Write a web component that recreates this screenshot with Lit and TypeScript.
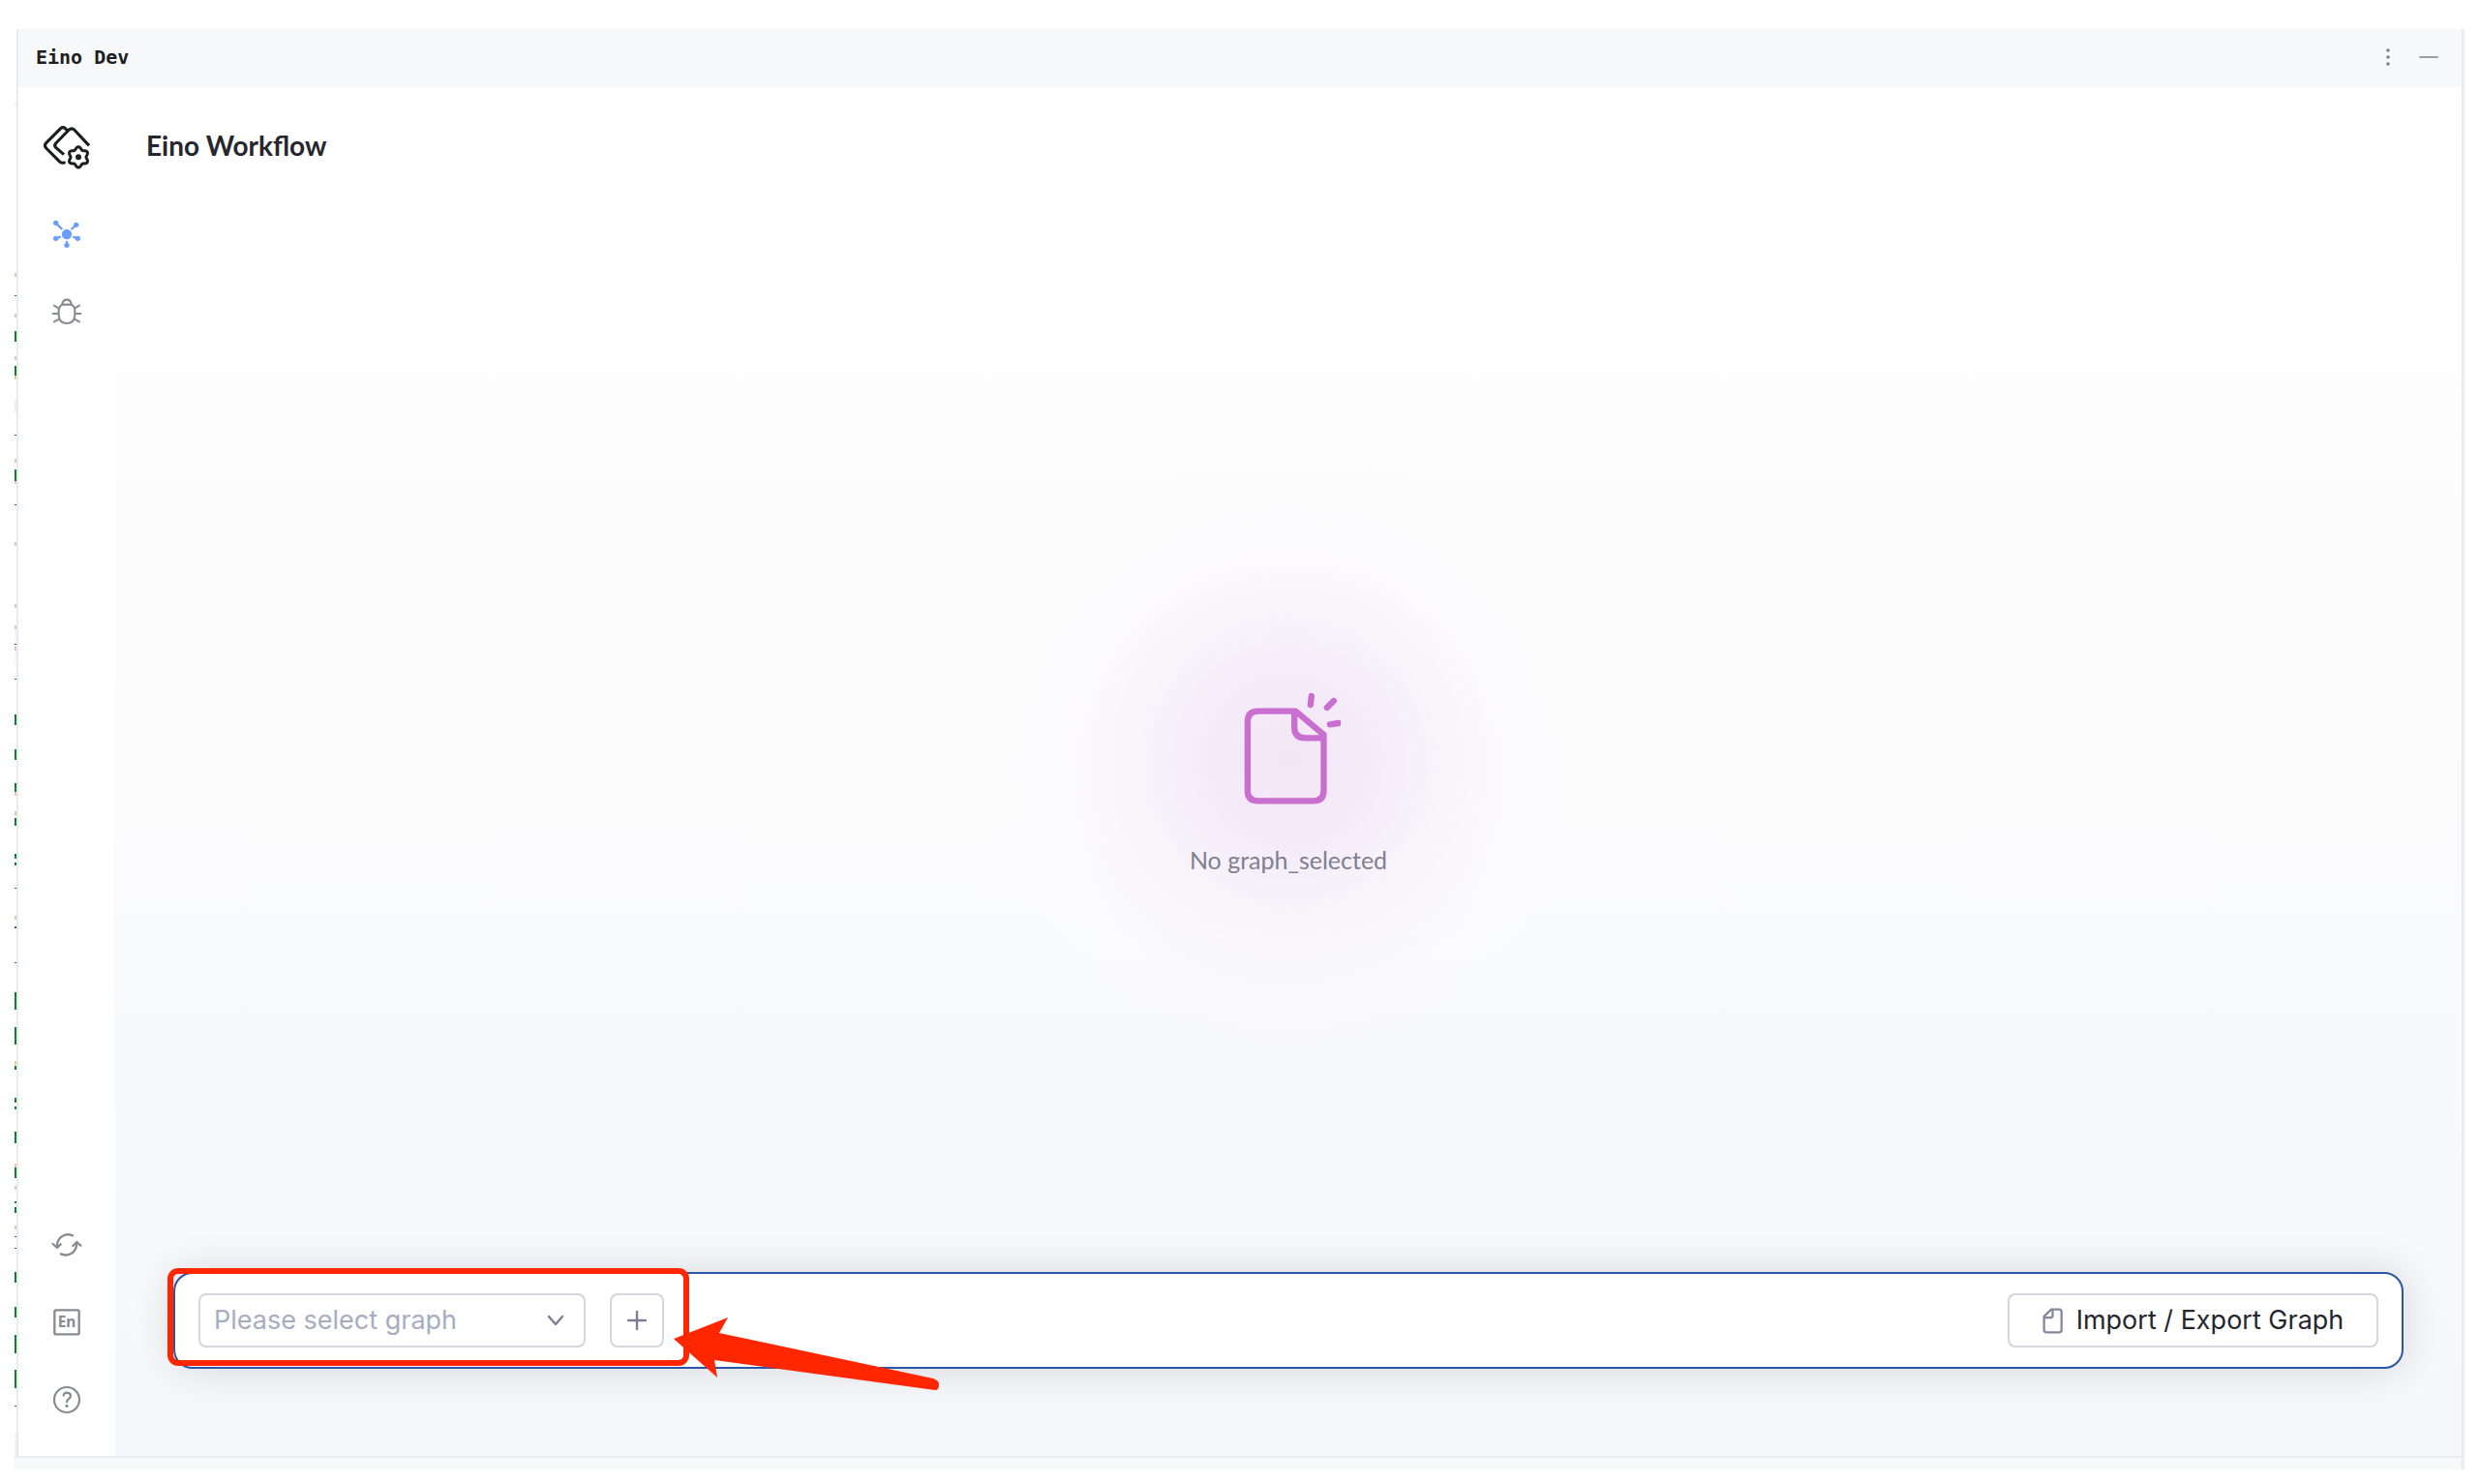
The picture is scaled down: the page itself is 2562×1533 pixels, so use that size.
import { LitElement, html, css, svg } from "lit";
import { customElement, state } from "lit/decorators.js";

/* Wavy closed outline used for the six-lobed cog in the logo. */
function cogPath(cx: number, cy: number, radius: number, depth: number): string {
  const points: string[] = [];
  for (let deg = 0; deg < 360; deg += 6) {
    const a = (deg * Math.PI) / 180;
    const r = radius + depth * Math.cos(6 * (a - Math.PI / 2));
    points.push(`${(cx + r * Math.cos(a)).toFixed(1)} ${(cy + r * Math.sin(a)).toFixed(1)}`);
  }
  return `M${points.join("L")}Z`;
}

const logoIcon = svg`
  <svg class="logo" viewBox="132 383 150 144" fill="none" stroke="#1d1e22" stroke-width="9.5" stroke-linecap="round" stroke-linejoin="round" aria-hidden="true">
    <path d="M207 402L202 397Q195 391 188 397L143 442Q136 450 143 458L186 501Q191 505 199 503"/>
    <path d="M198 478L173 456Q167 450 173 443L214 401Q222 394 230 401L276 450" stroke-linecap="butt"/>
    <path d="${cogPath(243, 486, 28, 4)}" stroke-width="9"/>
    <circle cx="243" cy="486" r="9" fill="#1d1e22" stroke="none"/>
  </svg>`;

const graphIcon = svg`
  <svg class="glyph" viewBox="159 678 96 96" stroke="#6b9dff" stroke-width="7" fill="#6b9dff" aria-hidden="true">
    <path d="M173 691L193 711M236 696L221 711M173 740L188 733M241 740L226 733M207 761V747"/>
    <g stroke="none">
      <circle cx="207" cy="726" r="15.5"/><circle cx="173" cy="691" r="8"/><circle cx="236" cy="697" r="8"/>
      <circle cx="173" cy="739" r="8"/><circle cx="241" cy="739" r="8"/><circle cx="207" cy="760" r="8"/>
    </g>
  </svg>`;

const bugIcon = svg`
  <svg class="glyph" viewBox="159 918 96 96" fill="none" stroke="#878b92" stroke-width="6.5" stroke-linecap="round" stroke-linejoin="round" aria-hidden="true">
    <path d="M193 944H221Q232 950 232 962V978Q230 1002 207 1002Q184 1002 182 978V962Q182 950 193 944Z"/>
    <path d="M193 943Q194 929 207 929Q220 929 221 943"/>
    <path d="M182 955L168 947M180 972H164M183 989L168 997M232 955L246 947M234 972H250M231 989L246 997"/>
  </svg>`;

const refreshIcon = svg`
  <svg class="glyph" viewBox="159 90 96 96" fill="none" stroke="#878b92" stroke-width="7" stroke-linecap="round" stroke-linejoin="round" aria-hidden="true">
    <path d="M225 109Q205 101 190 113Q175 126 177 146"/>
    <path d="M164 135L177 147L188 136"/>
    <path d="M189 166Q208 174 224 163Q239 150 238 130"/>
    <path d="M226 141L238 129L250 140"/>
  </svg>`;

const languageIcon = svg`
  <svg class="glyph" viewBox="159 324 96 96" aria-hidden="true">
    <rect x="169" y="334" width="76" height="75" rx="5" fill="none" stroke="#878b92" stroke-width="7"/>
    <text x="207" y="388" text-anchor="middle" class="lang">En</text>
  </svg>`;

const helpIcon = svg`
  <svg class="glyph" viewBox="159 570 96 96" fill="none" stroke="#878b92" stroke-width="6.5" stroke-linecap="round" aria-hidden="true">
    <circle cx="207" cy="618" r="39"/>
    <path d="M197 605Q198 596 208 596Q219 597 219 606Q219 611 213 615Q207 619 207 625"/>
    <circle cx="207" cy="637" r="5" fill="#878b92" stroke="none"/>
  </svg>`;

const emptyIcon = svg`
  <svg class="empty-icon" viewBox="235 78 320 348" fill="none" stroke="#c86fd0" stroke-width="19" aria-hidden="true">
    <path d="M416 134H300Q267 134 267 167V380Q267 412 300 412H470Q503 412 503 380V207Z" stroke-linejoin="round"/>
    <path d="M412 138V184Q412 217 445 217H503"/>
    <path d="M465 87L462 114M534 102L513 123M549 171L522 175" stroke-linecap="round"/>
  </svg>`;

const chevronIcon = svg`
  <svg class="chevron" viewBox="0 0 18 12" fill="none" stroke="#7c7f92" stroke-width="2.4" stroke-linecap="round" stroke-linejoin="round" aria-hidden="true">
    <path d="M2 2L9 10L16 2"/>
  </svg>`;

const plusIcon = svg`
  <svg class="plus" viewBox="0 0 20 20" stroke="#7c7f92" stroke-width="2.4" stroke-linecap="round" aria-hidden="true">
    <path d="M10 1V19M1 10H19"/>
  </svg>`;

const fileIcon = svg`
  <svg class="file" viewBox="212 178 64 82" fill="none" stroke="#85889a" stroke-width="7" stroke-linejoin="round" aria-hidden="true">
    <path d="M217 205L240 183H264Q272 183 272 191V247Q272 255 264 255H225Q217 255 217 247Z"/>
    <path d="M244 184V202Q244 209 237 209H218"/>
  </svg>`;

type Mark = [top: number, height: number, color: string];
const G = "#0a8420";
const T = "#d9cfa8";

/* Sliver of the code editor that stays visible beside the tool window. */
const editorMarks: Mark[] = [
  [108, 2, "#ebecf0"], [282, 4, T], [305, 1, G], [324, 4, T], [342, 11, G], [368, 4, T], [378, 10, G],
  [388, 4, T], [413, 13, "#e8f1ea"], [449, 1, G], [474, 4, T], [485, 12, G], [497, 3, T], [521, 1, G],
  [560, 4, T], [624, 4, T], [646, 4, T], [650, 35, "#f0f6ff"], [665, 1, G], [668, 4, T], [701, 1, G],
  [738, 11, G], [774, 11, G], [809, 9, G], [818, 4, T], [838, 4, T], [845, 8, G], [882, 5, G], [891, 3, G],
  [917, 1, G], [946, 4, T], [957, 2, G], [994, 1, G], [1025, 18, G], [1061, 18, G], [1096, 4, T],
  [1101, 4, G], [1134, 5, G], [1143, 3, G], [1169, 12, G], [1202, 4, T], [1206, 11, G], [1225, 4, T],
  [1241, 2, G], [1247, 6, G], [1266, 4, T], [1277, 1, G], [1289, 1, G], [1314, 11, G], [1350, 11, G],
  [1379, 19, G], [1415, 19, G], [1452, 1, G], [1482, 22, "#f2f2f2"],
];

@customElement("app-root")
export class AppRoot extends LitElement {
  @state() private graph = "";

  static styles = css`
    :host {
      display: block;
      background: #fff;
      font-family: Inter, "Liberation Sans", sans-serif;
      color: #26262e;
    }
    * { box-sizing: border-box; }
    svg { display: block; flex: none; }
    button, select { font: inherit; color: inherit; margin: 0; cursor: pointer; }
    .page {
      height: 100vh;
      min-height: 760px;
      padding: 30px 15px 15px;
      display: flex;
    }
    .window {
      flex: 1;
      min-width: 0;
      display: flex;
      flex-direction: column;
      border-right: 2px solid #e9eaee;
    }
    .edge { width: 2px; background: #f7f8fa; }
    .body { flex: 1; min-height: 0; display: flex; }
    .editor { width: 2px; height: 100%; }
    .tool {
      flex: 1;
      min-width: 0;
      display: flex;
      flex-direction: column;
      border-left: 2px solid #e9eaf0;
    }
    .status { height: 14px; background: #f7f8fa; border-top: 2px solid #e9eaee; }
    .titlebar {
      height: 60px;
      display: flex;
      align-items: center;
      justify-content: space-between;
      padding: 0 14px 3px 18px;
      background: #f7f8fa;
    }
    .tool-name {
      margin: 0;
      font: bold 20px/24px "DejaVu Sans Mono", monospace;
      color: #1d1e22;
    }
    .window-actions { display: flex; gap: 2px; }
    .window-actions button {
      width: 40px;
      height: 40px;
      padding: 0;
      border: 0;
      background: none;
      display: grid;
      place-items: center;
    }
    .content { flex: 1; min-height: 0; display: flex; }
    .sidebar {
      width: 100px;
      padding: 38px 0;
      display: flex;
      flex-direction: column;
      align-items: center;
      background: #fff;
    }
    .logo { width: 50px; height: 48px; margin-bottom: 46px; }
    .nav { display: flex; flex-direction: column; gap: 40px; }
    .nav.bottom { margin-top: auto; }
    .nav button {
      width: 40px;
      height: 40px;
      padding: 4px;
      border: 0;
      background: none;
    }
    .glyph { width: 32px; height: 32px; }
    .lang { font: bold 46px "Noto Sans", sans-serif; fill: #878b92; }
    .main {
      flex: 1;
      min-width: 0;
      display: flex;
      flex-direction: column;
      padding: 0 60px 90px;
      background: linear-gradient(#fff 0%, #fdfdfd 25%, #fbfbfc 50%, #f8f9fb 75%, #f6f7fa 100%);
    }
    .heading {
      margin: 0 -28px;
      padding: 42px 0 22px;
      font: bold 28px/36px Lato, sans-serif;
    }
    .stage {
      flex: 1;
      min-height: 0;
      padding-top: 64px;
      display: grid;
      place-content: center;
    }
    .empty {
      width: 640px;
      height: 640px;
      padding-top: 52px;
      display: flex;
      flex-direction: column;
      align-items: center;
      justify-content: center;
      gap: 40px;
      background: radial-gradient(circle closest-side, rgba(240, 222, 243, 0.7) 0%, rgba(241, 226, 248, 0.66) 25%, rgba(245, 236, 248, 0.55) 45%, rgba(249, 245, 251, 0.45) 62%, rgba(252, 250, 254, 0.3) 80%, rgba(252, 250, 254, 0) 100%);
    }
    .empty-icon { width: 107px; height: 116px; }
    .empty-text { margin: 0; font: 25px/32px Lato, sans-serif; color: #7f7f92; }
    .toolbar {
      position: relative;
      display: flex;
      align-items: center;
      gap: 25px;
      padding: 20px 24px;
      border: 2px solid #2a55a8;
      border-radius: 20px;
      background: #fff;
      box-shadow: 0 0 40px rgba(40, 44, 60, 0.16);
      font-size: 27px;
      line-height: 36px;
    }
    .picker { flex: none; display: grid; width: 400px; align-items: center; }
    .picker select, .picker .chevron { grid-area: 1 / 1; }
    .picker select {
      width: 100%;
      height: 56px;
      padding: 0 56px 0 14px;
      appearance: none;
      border: 2px solid #d5d5dd;
      border-radius: 8px;
      background: #fff;
      color: #a7adc0;
    }
    .chevron { width: 18px; height: 12px; justify-self: end; margin-right: 22px; pointer-events: none; }
    .outlined {
      height: 56px;
      display: flex;
      align-items: center;
      justify-content: center;
      border: 2px solid #d5d5dd;
      border-radius: 8px;
      background: #fff;
      padding: 0;
    }
    .add { width: 56px; }
    .plus { width: 20px; height: 20px; }
    .transfer { margin-left: auto; width: 383px; gap: 14px; }
    .file { width: 21px; height: 27px; }
    .callout {
      position: absolute;
      left: -8px;
      top: -6px;
      width: 539px;
      height: 101px;
      border: 6px solid #ff2600;
      border-radius: 11px;
      pointer-events: none;
    }
    .arrow {
      position: absolute;
      left: 509px;
      top: 38px;
      width: 290px;
      height: 90px;
      pointer-events: none;
    }
  `;

  private onSelect(event: Event) {
    this.graph = (event.target as HTMLSelectElement).value;
  }

  render() {
    return html`
      <div class="page">
        <div class="window">
          <div class="body">
            <svg class="editor" viewBox="0 30 2 1474" preserveAspectRatio="xMinYMin slice" aria-hidden="true">
              ${editorMarks.map(([top, height, color]) => svg`<rect x="0" y=${top} width="2" height=${height} fill=${color}></rect>`)}
            </svg>
            <section class="tool">
              <header class="titlebar">
                <h1 class="tool-name">Eino Dev</h1>
                <div class="window-actions">
                  <button aria-label="Options">
                    <svg width="4" height="20" viewBox="0 0 4 20" fill="#7c7f8e" aria-hidden="true">
                      <circle cx="2" cy="3" r="1.8"/><circle cx="2" cy="10" r="1.8"/><circle cx="2" cy="17" r="1.8"/>
                    </svg>
                  </button>
                  <button aria-label="Hide">
                    <svg width="20" height="2" viewBox="0 0 20 2" aria-hidden="true"><rect width="20" height="2" rx="1" fill="#9c9eab"/></svg>
                  </button>
                </div>
              </header>
              <div class="content">
                <aside class="sidebar">
                  ${logoIcon}
                  <nav class="nav">
                    <button aria-label="Workflow">${graphIcon}</button>
                    <button aria-label="Debug">${bugIcon}</button>
                  </nav>
                  <div class="nav bottom">
                    <button aria-label="Refresh">${refreshIcon}</button>
                    <button aria-label="Language">${languageIcon}</button>
                    <button aria-label="Help">${helpIcon}</button>
                  </div>
                </aside>
                <main class="main">
                  <h2 class="heading">Eino Workflow</h2>
                  <div class="stage">
                    <div class="empty">
                      ${emptyIcon}
                      <p class="empty-text">No graph_selected</p>
                    </div>
                  </div>
                  <div class="toolbar">
                    <div class="picker">
                      <select id="graph" aria-label="Graph" .value=${this.graph} @change=${this.onSelect}>
                        <option value="">Please select graph</option>
                      </select>
                      ${chevronIcon}
                    </div>
                    <button class="outlined add" aria-label="Add graph">${plusIcon}</button>
                    <button class="outlined transfer">${fileIcon}<span>Import / Export Graph</span></button>
                    <div class="callout"></div>
                    <svg class="arrow" viewBox="690 1354 290 90" fill="#ff2600" aria-hidden="true">
                      <path d="M696 1383L752 1361L743 1377L964 1424Q970 1426 970 1430Q970 1436 966 1436L738 1405L741 1423Z"/>
                    </svg>
                  </div>
                </main>
              </div>
            </section>
          </div>
          <div class="status"></div>
        </div>
        <div class="edge"></div>
      </div>
    `;
  }
}
